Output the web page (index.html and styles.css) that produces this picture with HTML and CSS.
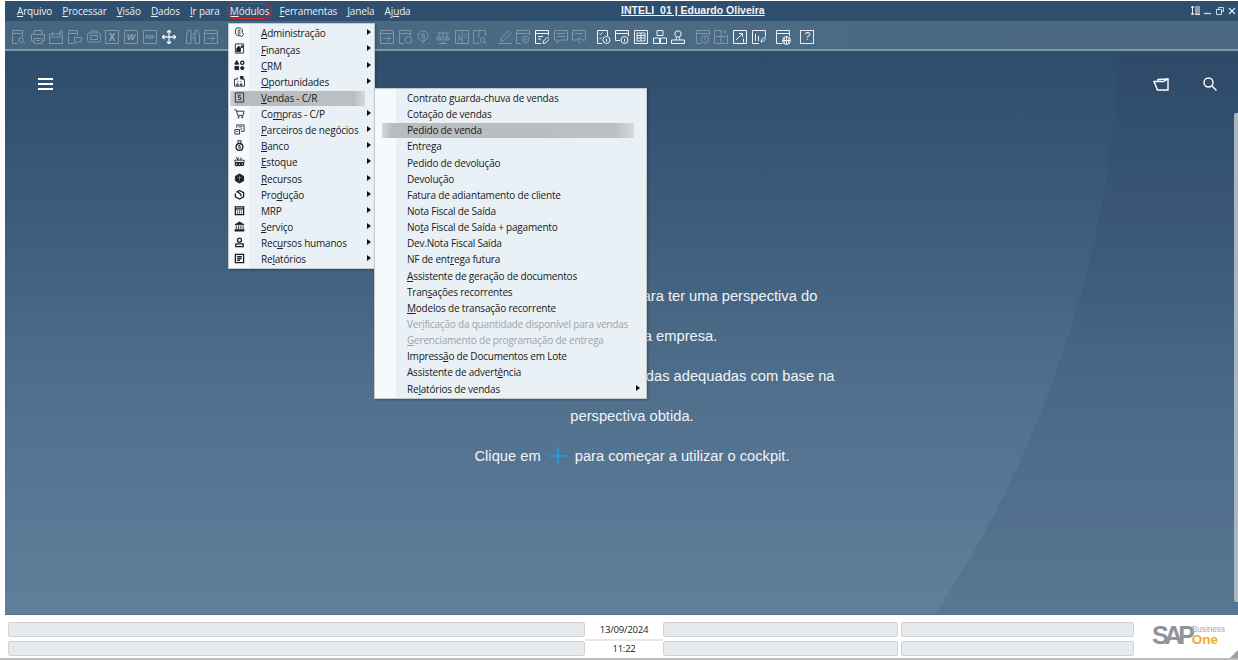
FILE: index.html
```html
<!DOCTYPE html>
<html lang="pt">
<head>
<meta charset="utf-8">
<title>SAP Business One</title>
<link rel="stylesheet" href="styles.css">
</head>
<body>
<svg class="defs" width="0" height="0" aria-hidden="true">
  <symbol id="find" viewBox="0 0 14 14"><path d="M5.500 13.500h-5V.500h10v6.500M.500 3.500h10"/><circle cx="9" cy="10" r="2.300"/><path d="M10.800 11.800l2.500 2"/></symbol>
  <symbol id="print" viewBox="0 0 14 14"><path d="M3 4.500v-4h8v4M3 11H.500V4.500h13V11H11M3 8.500h8v5H3zM5 10.500h4"/></symbol>
  <symbol id="cal" viewBox="0 0 14 14"><path d="M.500 4h13v9.500H.500zM.500 7h13M3.500 1.500v4M10.500 1.500v4M11 .5l2.500 1.500L11 3.500"/></symbol>
  <symbol id="docmsg" viewBox="0 0 14 14"><path d="M6 13.500H.500V.500h9v5M.500 3.500h9"/><path d="M6.500 7.500h7v4.500h-4l-2 1.500V12h-1z"/></symbol>
  <symbol id="prn2" viewBox="0 0 14 14"><rect x=".5" y="3" width="13" height="9" rx="1.500"/><path d="M4 1h6v2M3.500 5.500h7v4h-7z"/></symbol>
  <symbol id="move" viewBox="0 0 14 14"><path d="M7 0v14M0 7h14M7 0 5 2.500M7 0l2 2.500M7 14l-2-2.500M7 14l2-2.500M0 7l2.500-2M0 7l2.500 2M14 7l-2.500-2M14 7l-2.500 2" stroke-width="1.300"/></symbol>
  <symbol id="bino" viewBox="0 0 14 14"><path d="M.500 13.500V5l1.500-4.500h3v13zM13.500 13.500V5L12 .5H9v13zM5 4.500h4M5 8h4"/></symbol>
  <symbol id="arrow" viewBox="0 0 14 14"><path d="M.500 .500h13v13H.500zM.500 3.500h13M3.500 8.500h6.500M8 6l2.500 2.500L8 11"/></symbol>
  <symbol id="doccoin" viewBox="0 0 14 14"><path d="M5 13.500H.500V.500h11v6M.500 3.500h11"/><circle cx="9.500" cy="10" r="3.300"/></symbol>
  <symbol id="coin" viewBox="0 0 14 14"><circle cx="6" cy="6" r="5"/><path d="M9.500 9.500a3 3 0 1 0 3 3M7.500 4h-3v2h3v2h-3"/></symbol>
  <symbol id="scales" viewBox="0 0 14 14"><path d="M7 1v12M3 13.500h8M1 3h12M3 3v7M1 7h4v3H1zM11 3v7M9 7h4v3H9z"/></symbol>
  <symbol id="split" viewBox="0 0 14 14"><path d="M.500 .500h13v13H.500zM7 .500v13M3 5h2M3 7h2v3H3M9.500 5h2M9.500 8h2"/></symbol>
  <symbol id="splitf" viewBox="0 0 14 14"><path d="M6 13.500H.500V.500h12V6M6 .500V8"/><circle cx="9.500" cy="10" r="2.300"/><path d="M11.200 11.800l2 2"/></symbol>
  <symbol id="pencil" viewBox="0 0 14 14"><path d="M.500 13.500h13M2.500 11.500l1-3.500L10.500 1l2.500 2.500-7 7z"/></symbol>
  <symbol id="docgear" viewBox="0 0 14 14"><path d="M5 13.500H.500V.500h13v5M.500 3.500h13"/><circle cx="9.500" cy="9.500" r="3.300"/><circle cx="9.500" cy="9.500" r="1"/></symbol>
  <symbol id="docedit" viewBox="0 0 14 14"><path d="M6 13.500H.500V.500h13v5M.500 3.500h13M3 6.500h5M3 9h3"/><path d="M8 13.500l.5-2.500 4-4 2 2-4 4z"/></symbol>
  <symbol id="msg" viewBox="0 0 14 14"><path d="M.500 .500h13v9.500H6l-3 3v-3H.500zM3 3.500h8M3 6.500h8"/></symbol>
  <symbol id="msga" viewBox="0 0 14 14"><path d="M.500 .500h13v9.500h-4M5 10H.500V.500M3 3.500h8M7 14V7.500M4.800 10 7 7.500 9.200 10"/></symbol>
  <symbol id="chkinfo" viewBox="0 0 14 14"><path d="M5 13.500H.500V.500h10V6M2.500 3.500l1 1 2-2M2.500 8l1 1 1.500-1.500"/><circle cx="9.500" cy="10" r="3.500"/><path d="M9.500 8.800v3"/></symbol>
  <symbol id="wininfo" viewBox="0 0 14 14"><path d="M5 10.500H.500V.500h13V6M.500 3.500h13"/><circle cx="9.500" cy="10" r="3.500"/><path d="M9.500 8.800v3"/></symbol>
  <symbol id="calc" viewBox="0 0 14 14"><path d="M.500 .500h13v13H.500zM3 3h8v8H3zM3 5.500h8M3 8h8M7 3v8"/></symbol>
  <symbol id="users" viewBox="0 0 14 14"><path d="M4 .500h6v5H4zM.500 8h6v5.500h-6zM7.500 8h6v5.500h-6z"/></symbol>
  <symbol id="person" viewBox="0 0 14 14"><circle cx="7" cy="4" r="3.200"/><path d="M5.500 7.200 5 10M8.500 7.200 9 10M.500 10h13v3.500H.500z"/></symbol>
  <symbol id="docclock" viewBox="0 0 14 14"><path d="M5 13.500H.500V.500h13v5M.500 3.500h13"/><circle cx="9" cy="9.500" r="3.800"/><path d="M9 7.500v2l1.500 1"/></symbol>
  <symbol id="gridstar" viewBox="0 0 14 14"><path d="M.500 .500h8M.500 .500v13h13V5M7 .500v13M.500 6.500h13M11 .5v3M9.500 2h3"/></symbol>
  <symbol id="chart" viewBox="0 0 14 14"><path d="M.500 .500h13v13H.500zM3 10l6-6M6 3.500h3.500V7M10.500 8.500v4"/></symbol>
  <symbol id="bars" viewBox="0 0 14 14"><path d="M.500 .500h13v6M.500 .500v13H7M3.500 4v7M6.500 6v5M9 12l.5-2 3-3 1.500 1.500-3 3z"/></symbol>
  <symbol id="web" viewBox="0 0 15 15"><path d="M6 13.500H.500V.500h13V6M.500 3.500h13"/><circle cx="10.500" cy="10.500" r="4"/><path d="M6.500 10.500h8M10.500 6.500v8M8.500 7.500q-1 3 0 6M12.500 7.500q1 3 0 6"/></symbol>
</svg>

<div class="app">
  <header class="titlebar">
    <nav class="menubar">
      <span class="mi"><u>A</u>rquivo</span>
      <span class="mi"><u>P</u>rocessar</span>
      <span class="mi"><u>V</u>isão</span>
      <span class="mi"><u>D</u>ados</span>
      <span class="mi"><u>I</u>r para</span>
      <span class="mi mi-active"><u>M</u>ódulos</span>
      <span class="mi"><u>F</u>erramentas</span>
      <span class="mi"><u>J</u>anela</span>
      <span class="mi">Aj<u>u</u>da</span>
    </nav>
    <div class="apptitle">INTELI_01 | Eduardo Oliveira</div>
    <div class="winctl">
      <svg width="9" height="9" viewBox="0 0 9 9"><path d="M1.500 0v9M0 2l1.500-2L3 2M0 7l1.500 2L3 7M4 1h5M4 3h5M4 5h5M4 7h5M4 8.500h5" stroke="#e9eef2" fill="none"/></svg>
      <svg width="8" height="8" viewBox="0 0 8 8"><path d="M0 6.500h7" stroke="#cdd7df" stroke-width="1.300"/></svg>
      <svg width="8" height="8" viewBox="0 0 8 8"><path d="M2.500 2V.500h5v4H6M.500 2.500h5v5h-5z" stroke="#cdd7df" fill="none"/></svg>
      <svg width="8" height="8" viewBox="0 0 8 8"><path d="M1 1l6 6M7 1L1 7" stroke="#e9eef2" stroke-width="1.200"/></svg>
    </div>
  </header>

  <div class="toolbar">
    <div class="tgroup tg-a">
      <svg class="ti"><use href="#find"/></svg>
      <svg class="ti"><use href="#print"/></svg>
      <svg class="ti"><use href="#cal"/></svg>
      <svg class="ti"><use href="#docmsg"/></svg>
      <svg class="ti"><use href="#prn2"/></svg>
      <svg class="ti" viewBox="0 0 14 14"><path d="M.500 .500h13v13H.500z"/><text class="tx" x="7" y="10.500">X</text></svg>
      <svg class="ti" viewBox="0 0 14 14"><path d="M.500 .500h13v13H.500z"/><text class="tx ital" x="7" y="10">W</text></svg>
      <svg class="ti" viewBox="0 0 14 14"><path d="M.500 .500h13v13H.500z"/><text class="tx tiny" x="7" y="9">PDF</text></svg>
      <svg class="ti ti-on"><use href="#move"/></svg>
      <svg class="ti ti-gap"><use href="#bino"/></svg>
      <svg class="ti"><use href="#arrow"/></svg>
    </div>
    <div class="tgroup">
      <svg class="ti"><use href="#arrow"/></svg>
      <svg class="ti"><use href="#doccoin"/></svg>
      <svg class="ti"><use href="#coin"/></svg>
      <svg class="ti"><use href="#scales"/></svg>
      <svg class="ti"><use href="#split"/></svg>
      <svg class="ti"><use href="#splitf"/></svg>
      <svg class="ti ti-gap"><use href="#pencil"/></svg>
      <svg class="ti"><use href="#docgear"/></svg>
      <svg class="ti ti-on"><use href="#docedit"/></svg>
      <svg class="ti"><use href="#msg"/></svg>
      <svg class="ti"><use href="#msga"/></svg>
      <svg class="ti ti-on ti-gap"><use href="#chkinfo"/></svg>
      <svg class="ti ti-on"><use href="#wininfo"/></svg>
      <svg class="ti ti-on"><use href="#calc"/></svg>
      <svg class="ti ti-on"><use href="#users"/></svg>
      <svg class="ti ti-on"><use href="#person"/></svg>
      <svg class="ti ti-gap"><use href="#docclock"/></svg>
      <svg class="ti"><use href="#gridstar"/></svg>
      <svg class="ti ti-on"><use href="#chart"/></svg>
      <svg class="ti ti-on"><use href="#bars"/></svg>
      <svg class="ti ti-on ti-wide ti-gap"><use href="#web"/></svg>
      <span class="helpbtn">?</span>
    </div>
  </div>

  <main class="cockpit">
    <svg class="swoosh" viewBox="0 0 1233 564" preserveAspectRatio="none"><path d="M1114 0C1106 200 1040 400 930 564H1233V0Z"/></svg>
    <div class="cockpit-top">
      <span class="burger"><i></i><i></i><i></i></span>
      <div class="cockpit-tools">
        <svg width="16" height="13" viewBox="0 0 16 13" fill="none" stroke="#fff" stroke-width="1.400"><path d="M1 3.500h9.500L15 1v11H4.500z"/><path d="M5 3V1.500L15 1"/></svg>
        <svg width="14" height="14" viewBox="0 0 14 14" fill="none" stroke="#fff" stroke-width="1.400"><circle cx="5.500" cy="5.500" r="4.500"/><path d="M9 9l4.500 4.500"/></svg>
      </div>
    </div>
    <div class="welcome">
      <p>Utilize os widgets do cockpit para ter uma perspectiva do</p>
      <p>desempenho da empresa.</p>
      <p>Analise os dados e tome as medidas adequadas com base na</p>
      <p>perspectiva obtida.</p>
      <p>Clique em <svg class="plus" width="18" height="18" viewBox="0 0 18 18"><path d="M9 0v18M0 9h18" stroke="#1f9fe0" stroke-width="1.600"/></svg> para começar a utilizar o cockpit.</p>
    </div>
    <div class="scrollbar"></div>
  </main>

  <footer class="statusbar">
    <div class="status-grid">
      <div class="fld f1"></div><div class="stamp">13/09/2024</div><div class="fld f2"></div><div class="fld f3"></div>
      <div class="fld f1"></div><div class="stamp stamp-low">11:22</div><div class="fld f2"></div><div class="fld f3"></div>
    </div>
    <div class="logo">
      <span class="sap">SAP</span>
      <span class="bo"><span class="bus">Business</span><span class="one">One</span></span>
    </div>
    <svg class="grip" width="8" height="8" viewBox="0 0 8 8"><path d="M8 0v8H0z" fill="#9aa0a5"/></svg>
  </footer>

  <div class="menu menu-mod">
    <div class="row"><svg class="ic" viewBox="0 0 12 12"><path d="M3 1h4l2 2v3l1.500 2-2 2.500-2-1H4L1.500 7.500v-4zM4 3.500h3M4 5.500h3M4 7.500h3"/></svg><span class="lb"><u>A</u>dministração</span><i class="car"></i></div>
    <div class="row"><svg class="ic" viewBox="0 0 12 12"><path d="M1.500 1h9v10h-9z"/><path class="fill" d="M3 9.500V6l2-2.500L7 5v4.500zM8 3h1.500v2H8z"/></svg><span class="lb"><u>F</u>inanças</span><i class="car"></i></div>
    <div class="row"><svg class="ic" viewBox="0 0 12 12"><path class="fill" d="M3 .5 5.200 4.500H.800zM1 7h4v3.500H1z"/><circle class="fill" cx="9" cy="8.800" r="1.800"/><circle class="thick" cx="9" cy="3" r="1.800"/></svg><span class="lb"><u>C</u>RM</span><i class="car"></i></div>
    <div class="row"><svg class="ic" viewBox="0 0 12 12"><path d="M.500 3.500h3v-2M8 3.500h3.500v7.500H.500v-7.500M3 8.500h1.500v2H3zM7 8.500h1.500v2H7zM3.500 6h1M7 6h1"/><path class="fill" d="M7 .5h3V3H7z"/></svg><span class="lb"><u>O</u>portunidades</span><i class="car"></i></div>
    <div class="row hot"><svg class="ic" viewBox="0 0 12 12"><path d="M1.500 1h9v10h-9z"/><path d="M7.500 3.500H4.800v2.300h2.500v2.500H4.500"/></svg><span class="lb"><u>V</u>endas - C/R</span></div>
    <div class="row"><svg class="ic" viewBox="0 0 12 12"><path d="M.5 2h2l1.500 6h6l1-4.500H3"/><circle cx="5" cy="10" r=".8"/><circle cx="9" cy="10" r=".8"/></svg><span class="lb">Co<u>m</u>pras - C/P</span><i class="car"></i></div>
    <div class="row"><svg class="ic" viewBox="0 0 12 12"><path d="M3 4V1h8v7H7.500M1 6h5v5H1zM5 3h4M7 5.500h2M2.500 8h2"/></svg><span class="lb"><u>P</u>arceiros de negócios</span><i class="car"></i></div>
    <div class="row"><svg class="ic" viewBox="0 0 12 12"><circle class="thick" cx="6" cy="7.500" r="3.700"/><path d="M4 .8h4L7 3.800H5zM7 6H5.200v1.500H7V9H5"/></svg><span class="lb"><u>B</u>anco</span><i class="car"></i></div>
    <div class="row"><svg class="ic" viewBox="0 0 12 12"><path d="M1 4.500h10v2.500H1zM2.500 1l2 3.500M5 1.500 4 4.500M8 1.500 7 4.500"/><circle class="thick" cx="3" cy="9" r="1.500"/><circle class="thick" cx="6" cy="9" r="1.500"/><circle class="thick" cx="9" cy="9" r="1.500"/></svg><span class="lb"><u>E</u>stoque</span><i class="car"></i></div>
    <div class="row"><svg class="ic" viewBox="0 0 12 12"><path class="fill" d="M6 1l4.500 2.500v5L6 11 1.500 8.500v-5z"/><path class="hole" d="M3.500 5h5M6 3v6"/></svg><span class="lb"><u>R</u>ecursos</span><i class="car"></i></div>
    <div class="row"><svg class="ic" viewBox="0 0 12 12"><path class="thick" d="M2.500 3.500 6 1.500l4.500 2.500v4.500L6 11 1.500 8.500V5"/><path class="thick" d="M4 3l3.500 3v2"/></svg><span class="lb">Pro<u>d</u>ução</span><i class="car"></i></div>
    <div class="row"><svg class="ic" viewBox="0 0 12 12"><path class="thick" d="M1.500 2h9v8.500h-9zM1.500 4.300h9M3.500 6.500h1M5.500 6.500h1M7.500 6.500h1M3.500 8.500h1M5.500 8.500h1M7.500 8.500h1"/></svg><span class="lb">MRP</span><i class="car"></i></div>
    <div class="row"><svg class="ic" viewBox="0 0 12 12"><path class="fill" d="M6 1l5 3H1zM1 9.500h10V11H1z"/><path d="M2.500 5v4M5 5v4M7.500 5v4M10 5v4"/></svg><span class="lb"><u>S</u>erviço</span><i class="car"></i></div>
    <div class="row"><svg class="ic" viewBox="0 0 12 12"><circle class="thick" cx="6" cy="3.500" r="2.200"/><path class="thick" d="M2 10.500V7.500h8v3z"/></svg><span class="lb">Rec<u>u</u>rsos humanos</span><i class="car"></i></div>
    <div class="row"><svg class="ic" viewBox="0 0 12 12"><path class="thick" d="M1.500 1.500h9v9h-9zM3.500 4h5M3.500 6h5M3.500 8h3"/></svg><span class="lb">Re<u>l</u>atórios</span><i class="car"></i></div>
  </div>

  <div class="menu menu-sub">
    <div class="row"><span class="lb">Contrato guarda-chuva de vendas</span></div>
    <div class="row"><span class="lb">Cotação de vendas</span></div>
    <div class="row hot"><span class="lb">Pedido de venda</span></div>
    <div class="row"><span class="lb">Entrega</span></div>
    <div class="row"><span class="lb">Pedido de devolução</span></div>
    <div class="row"><span class="lb">Devolução</span></div>
    <div class="row"><span class="lb">Fatura de adiantamento de cliente</span></div>
    <div class="row"><span class="lb">Nota Fiscal de Saída</span></div>
    <div class="row"><span class="lb">No<u>t</u>a Fiscal de Saída + pagamento</span></div>
    <div class="row"><span class="lb">Dev.Nota Fiscal Saída</span></div>
    <div class="row"><span class="lb">NF de ent<u>r</u>ega futura</span></div>
    <div class="row"><span class="lb"><u>A</u>ssistente de geração de documentos</span></div>
    <div class="row"><span class="lb">Tran<u>s</u>ações recorrentes</span></div>
    <div class="row"><span class="lb"><u>M</u>odelos de transação recorrente</span></div>
    <div class="row off"><span class="lb">Ver<u>i</u>ficação da quantidade disponível para vendas</span></div>
    <div class="row off"><span class="lb"><u>G</u>erenciamento de programação de entrega</span></div>
    <div class="row"><span class="lb">Impress<u>ã</u>o de Documentos em Lote</span></div>
    <div class="row"><span class="lb">Assistente de advert<u>ê</u>ncia</span></div>
    <div class="row"><span class="lb">Re<u>l</u>atórios de vendas</span><i class="car"></i></div>
  </div>
</div>
</body>
</html>
```

FILE: styles.css
```css
* { box-sizing: border-box; }
html, body { margin: 0; padding: 0; height: 100%; overflow: hidden; background: #fff; }
.defs { display: block; height: 0; }
.app {
  position: relative;
  width: 1238px;
  height: 660px;
  display: flex;
  flex-direction: column;
  font-family: "Open Sans", "Noto Sans", sans-serif;
  background: #fff;
  padding-top: 1px;
}

/* title + menu bar */
.titlebar {
  height: 20px;
  flex: none;
  margin-left: 5px;
  background: #2f4f6f;
  display: flex;
  align-items: center;
  position: relative;
  padding-left: 12px;
  color: #e8edf2;
}
.menubar { display: flex; font-size: 10px; letter-spacing: -0.15px; }
.mi { margin-right: 10.1px; white-space: nowrap; position: relative; }
.mi-active::before {
  content: "";
  position: absolute;
  left: -3px;
  right: -3px;
  top: -1px;
  bottom: -1px;
  border: 1px solid #e0202a;
  border-radius: 8px;
}
.apptitle {
  position: absolute;
  left: 616px;
  top: 3px;
  font-family: "Liberation Sans", sans-serif;
  font-size: 10.5px;
  font-weight: 700;
  color: #f2f5f8;
  text-decoration: underline;
  white-space: nowrap;
}
.winctl {
  position: absolute;
  right: 2px;
  top: 5px;
  display: flex;
  gap: 4px;
  align-items: center;
}

/* toolbar */
.toolbar {
  height: 30px;
  flex: none;
  margin-left: 5px;
  background: linear-gradient(90deg, #466680, #4b6a84 50%, #4a6882);
  border-bottom: 2px solid #8197a9;
  display: flex;
  align-items: center;
  padding: 4px 0 0 7px;
}
.tgroup { display: flex; align-items: center; gap: 4.7px; }
.tg-a { width: 368px; }
.ti {
  width: 14px;
  height: 14px;
  fill: none;
  stroke: #7d96aa;
  stroke-width: 1;
  flex: none;
}
.ti-on { stroke: #eef3f6; }
.ti-wide { width: 15px; height: 15px; }
.ti-gap { margin-left: 5.5px; }
.tx {
  stroke: none;
  fill: #8fa6b8;
  font-family: "Liberation Sans", sans-serif;
  font-size: 10px;
  font-weight: 700;
  text-anchor: middle;
}
.ital { font-style: italic; font-size: 9px; }
.tiny { font-size: 4.5px; }
.helpbtn {
  width: 14px;
  height: 14px;
  margin-left: 5px;
  border: 1px solid #e8edf2;
  color: #eef3f6;
  font: 10px/12px "Liberation Sans", sans-serif;
  text-align: center;
}

/* cockpit */
.cockpit {
  flex: 1;
  margin-left: 5px;
  position: relative;
  background: linear-gradient(180deg, #2e4d6c 0%, #3d5c7a 30%, #4f6f8d 60%, #5f7f9b 100%);
  color: #f1f4f7;
  overflow: hidden;
  border-bottom: 1px solid #54718c;
}
.swoosh {
  position: absolute;
  left: 0;
  top: 0;
  width: 100%;
  height: 100%;
  fill: rgba(28, 52, 82, 0.1);
  pointer-events: none;
}
.cockpit-top {
  position: relative;
  display: flex;
  justify-content: space-between;
  align-items: center;
  padding: 26px 21px 0 33px;
}
.burger { display: flex; flex-direction: column; gap: 3px; width: 15px; }
.burger i { display: block; height: 2px; background: #fff; }
.cockpit-tools { display: flex; gap: 34px; align-items: center; }
.welcome {
  position: absolute;
  left: 0;
  right: 0;
  top: 225px;
  padding-left: 21px;
  text-align: center;
  font-family: "Liberation Sans", sans-serif;
  font-size: 14.7px;
  line-height: 40.1px;
}
.welcome p { margin: 0; white-space: nowrap; }
.plus { vertical-align: -4px; margin: 0 4px; }
.scrollbar {
  position: absolute;
  right: 0;
  top: 62px;
  width: 4px;
  bottom: 12px;
  background: #aeb6bd;
  border-radius: 2px 0 0 2px;
}

/* status bar */
.statusbar {
  height: 45px;
  flex: none;
  position: relative;
  background: #fff;
  border-bottom: 2px solid #bcbcbc;
  display: flex;
}
.status-grid {
  margin: 7px 0 0 8px;
  display: grid;
  grid-template-columns: 577px 78px 238px 233px;
  grid-auto-rows: 15px;
  row-gap: 4px;
  height: 34px;
}
.fld {
  background: #e6eaed;
  border: 1px solid #d0d3d5;
  border-radius: 2px;
}
.f2 { margin-right: 3px; }
.stamp {
  font: 9.6px/15px "Open Sans", sans-serif;
  letter-spacing: -0.25px;
  text-align: center;
  color: #222;
}
.stamp-low { box-shadow: 0 -2px 0 #e6e8ea; }
.logo {
  position: absolute;
  left: 1152px;
  top: 10px;
  display: flex;
  align-items: flex-start;
}
.sap {
  font: 700 25px/20px "Liberation Sans", sans-serif;
  letter-spacing: -4.2px;
  color: #8e9498;
  margin-right: 1px;
}
.bo { display: flex; flex-direction: column; }
.bus { font: 8.2px/9px "Liberation Sans", sans-serif; color: #a3a8ac; }
.one { font: 700 13.5px/11px "Liberation Sans", sans-serif; color: #f0ab30; }
.grip { position: absolute; right: 0; bottom: 0; }

/* menus */
.menu {
  position: absolute;
  border: 1px solid #c4c9cd;
  box-shadow: 1px 1px 2px rgba(20, 30, 40, 0.35);
  font-size: 10px;
  letter-spacing: -0.2px;
  color: #202020;
  z-index: 5;
}
.menu-mod {
  left: 228px;
  top: 23px;
  width: 147px;
  height: 246px;
  padding-top: 1.3px;
  background: linear-gradient(90deg, #f7fafc 0, #f7fafc 20px, #e9f0f6 20px);
}
.menu-sub {
  left: 374px;
  top: 88px;
  width: 273px;
  height: 311px;
  padding-top: 1px;
  z-index: 6;
  background: linear-gradient(90deg, #f7fafc 0, #f7fafc 21px, #e9f0f6 21px);
}
.row {
  height: 16.15px;
  padding-left: 32px;
  display: flex;
  align-items: center;
  position: relative;
  white-space: nowrap;
}
.lb { position: relative; }
.ic {
  position: absolute;
  left: 5px;
  top: 2px;
  width: 11px;
  height: 11px;
  fill: none;
  stroke: #2a2a2a;
  stroke-width: 1;
}
.ic .fill { fill: #1c1c1c; }
.ic .thick { stroke-width: 1.4; stroke: #1c1c1c; }
.ic .hole { stroke: #7a7a7a; }
.car {
  position: absolute;
  right: 3px;
  top: 4px;
  width: 0;
  height: 0;
  border-left: 4px solid #111;
  border-top: 3px solid transparent;
  border-bottom: 3px solid transparent;
}
.menu-sub .car { right: 6px; }
.hot { z-index: 0; }
.hot::before {
  content: "";
  position: absolute;
  left: 3px;
  right: 9px;
  top: 1px;
  bottom: 0;
  background: linear-gradient(90deg, #d5d8da 0, #b9bcbe 4%, #bcbfc1 92%, #d5d9dc);
  z-index: -1;
}
.menu-mod .hot::before { left: 1px; }
.menu-sub .hot::before { left: 7px; right: 12px; }
.off { color: #9ea3a8; }
```
